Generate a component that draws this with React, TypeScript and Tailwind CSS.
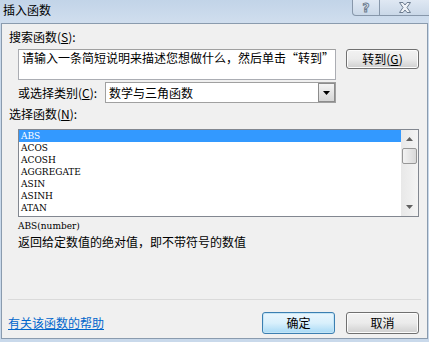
import React from 'react';

const FUNCS = ['ABS', 'ACOS', 'ACOSH', 'AGGREGATE', 'ASIN', 'ASINH', 'ATAN'];

function Btn({ children, primary }: { children: React.ReactNode; primary?: boolean }) {
  return (
    <div
      className={
        'w-[73px] h-[22px] rounded-[3px] border flex items-center justify-center text-[12px] leading-none ' +
        (primary
          ? 'border-[#3c7fb1] bg-gradient-to-b from-[#eaf6fd] via-[#d9f0fc] to-[#a7d9f5] shadow-[inset_0_0_0_1px_#c4e5f6]'
          : 'border-[#707070] bg-gradient-to-b from-[#f2f2f2] via-[#ebebeb] to-[#cfcfcf] shadow-[inset_0_0_0_1px_#fcfcfc]')
      }
    >
      {children}
    </div>
  );
}

export default function App() {
  return (
    <div className="w-[429px] h-[342px] relative overflow-hidden bg-[#c9d9eb] text-black font-['Noto_Sans_CJK_SC','Liberation_Sans',sans-serif]">
      {/* Title bar */}
      <div className="h-[23px] px-[3px] pt-[3px] text-[12px] leading-[14px] bg-gradient-to-b from-[#c2d4e8] to-[#d0deee]">
        插入函数
      </div>
      <div className="absolute top-0 left-[352px] flex">
        <div className="w-[28px] h-[16px] border border-t-0 border-[#8797aa] rounded-bl-[4px] bg-gradient-to-b from-[#dfe8f3] to-[#cad8e8] flex items-center justify-center text-[12px] leading-none font-['DejaVu_Sans',sans-serif] font-bold text-[#e9eef5] [-webkit-text-stroke:1px_#6d7d90]">
          ?
        </div>
        <div className="w-[50px] h-[16px] border border-t-0 border-l-0 border-[#8797aa] bg-gradient-to-b from-[#dfe8f3] to-[#cad8e8] flex items-center justify-center">
          <svg width="14" height="11" viewBox="0 0 14 11">
            <path
              d="M1.5 0.5 H5 L7 3 L9 0.5 H12.5 L9 5.5 L12.5 10.5 H9 L7 8 L5 10.5 H1.5 L5 5.5 Z"
              fill="#eef2f7"
              stroke="#6d7d90"
              strokeWidth="1"
            />
          </svg>
        </div>
      </div>

      {/* Content */}
      <div className="ml-[1px] w-[427px] h-[316px] border border-[#8a9bae] bg-[#f0f0f0]">
        <div className="h-[25px] pl-[7px] pt-[6px] text-[12px] leading-[14px]">
          搜索函数(<span className="underline">S</span>):
        </div>
        <div className="flex pl-[16px] gap-[10px] h-[31px]">
          <div className="w-[318px] h-[31px] bg-white border border-[#abadb3] border-t-[#a0a0a0] px-[3px] pt-[1px] text-[12px] leading-[14px]">
            请输入一条简短说明来描述您想做什么，然后单击“转到”
          </div>
          <div className="w-[73px] h-[20px] rounded-[3px] border border-[#707070] bg-gradient-to-b from-[#f2f2f2] via-[#ebebeb] to-[#cfcfcf] shadow-[inset_0_0_0_1px_#fcfcfc] flex items-center justify-center text-[12px] leading-none">
            转到(<span className="underline">G</span>)
          </div>
        </div>
        <div className="flex items-center mt-[2px] pl-[16px] h-[21px]">
          <div className="w-[87px] text-[12px] leading-[14px]">
            或选择类别(<span className="underline">C</span>):
          </div>
          <div className="w-[231px] h-[21px] bg-white border border-[#a0a0a0] flex items-center">
            <div className="flex-1 pl-[3px] text-[12px] leading-[14px]">数学与三角函数</div>
            <div className="w-[17px] h-[19px] border border-[#8c8c8c] bg-gradient-to-b from-[#f4f4f4] to-[#d6d6d6] flex items-center justify-center">
              <svg width="7" height="4" viewBox="0 0 7 4">
                <path d="M0 0 H7 L3.5 4 Z" fill="#000" />
              </svg>
            </div>
          </div>
        </div>
        <div className="h-[26px] pl-[7px] pt-[4px] text-[12px] leading-[14px]">
          选择函数(<span className="underline">N</span>):
        </div>
        <div className="ml-[16px] w-[401px] h-[88px] bg-white border border-[#828790] flex">
          <div className="flex-1 font-['DejaVu_Serif_Condensed','Liberation_Serif',serif] text-[10px] leading-[12px]">
            {FUNCS.map((f, i) => (
              <div
                key={f}
                className={'h-[12px] pl-[2px] ' + (i === 0 ? 'bg-[#3399ff] text-white' : '')}
              >
                {f}
              </div>
            ))}
          </div>
          <div className="w-[17px] bg-gradient-to-r from-[#e8e8e8] to-[#f4f4f4] flex flex-col items-center">
            <div className="h-[18px] flex items-center justify-center">
              <svg width="7" height="4" viewBox="0 0 7 4">
                <path d="M0 4 H7 L3.5 0 Z" fill="#606060" />
              </svg>
            </div>
            <div className="w-[15px] h-[16px] rounded-[2px] border border-[#979797] bg-gradient-to-r from-[#f3f3f3] to-[#d9d9d9]" />
            <div className="flex-1" />
            <div className="h-[18px] flex items-center justify-center">
              <svg width="7" height="4" viewBox="0 0 7 4">
                <path d="M0 0 H7 L3.5 4 Z" fill="#606060" />
              </svg>
            </div>
          </div>
        </div>
        <div className="mt-[3px] pl-[16px] h-[12px] font-['DejaVu_Serif_Condensed','Liberation_Serif',serif] text-[10px] leading-[12px]">
          ABS(number)
        </div>
        <div className="mt-[3px] pl-[16px] h-[14px] text-[12px] leading-[14px]">
          返回给定数值的绝对值，即不带符号的数值
        </div>
        <div className="mt-[50px] ml-[6px] w-[413px] h-px bg-[#dadada]" />
        <div className="mt-[12px] flex items-center h-[22px] pl-[6px] pr-[8px]">
          <div className="flex-1 text-[12px] leading-[14px] text-[#0066cc] underline">有关该函数的帮助</div>
          <div className="flex gap-[11px]">
            <Btn primary>确定</Btn>
            <Btn>取消</Btn>
          </div>
        </div>
      </div>
    </div>
  );
}
